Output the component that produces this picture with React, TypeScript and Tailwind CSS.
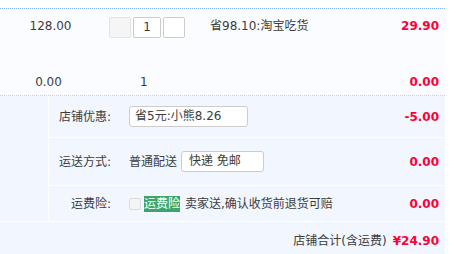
export default function App() {
  return (
    <div className="w-[456px] h-[254px] overflow-hidden bg-white text-[12px] text-[#3c3c3c] font-['DejaVu_Sans','Noto_Sans_CJK_SC',sans-serif]">
      <div className="w-[445px] pt-[8px]">
        {/* item row */}
        <div className="border-t border-b border-dotted border-t-[#80b2ff] border-b-[#d0d0d0] bg-[#fbfcff] pt-[8px] pb-[4px]">
          <div className="flex items-start h-[21px]">
            <div className="w-[101px] text-center leading-[18px]">128.00</div>
            <div className="ml-[8px] flex gap-[2px]">
              <div className="w-[22px] h-[21px] rounded-[2px] border border-[#e3e3e3] bg-[#f5f5f5]" />
              <div className="w-[28px] h-[21px] rounded-[2px] border border-[#cccccc] bg-white text-center leading-[19px]">1</div>
              <div className="w-[22px] h-[21px] rounded-[2px] border border-[#cccccc] bg-white" />
            </div>
            <div className="ml-[25px] leading-[18px]">省98.10:淘宝吃货</div>
            <div className="flex-1 pr-[6px] text-right font-bold leading-[18px] text-[#ff0036]">29.90</div>
          </div>
          <div className="mt-[35px] flex h-[18px] leading-[18px]">
            <div className="w-[97px] text-center">0.00</div>
            <div className="ml-[43px]">1</div>
            <div className="flex-1 pr-[6px] text-right font-bold text-[#ff0036]">0.00</div>
          </div>
        </div>

        {/* shop options */}
        <div className="flex border-b border-white bg-[#f2f6ff]">
          <div className="w-[49px] border-r border-white" />
          <div className="flex flex-1 flex-col">
            <div className="flex h-[42px] items-center border-b border-white">
              <div className="w-[62px] text-right">店铺优惠:</div>
              <div className="ml-[18px] h-[21px] w-[119px] rounded-[3px] border border-[#cccccc] bg-white pl-[5px] leading-[19px]">省5元:小熊8.26</div>
              <div className="flex-1 pr-[6px] text-right font-bold text-[#ff0036]">-5.00</div>
            </div>
            <div className="flex h-[48px] items-center border-b border-white">
              <div className="w-[62px] text-right">运送方式:</div>
              <div className="ml-[18px]">普通配送</div>
              <div className="ml-[4px] h-[21px] w-[83px] rounded-[3px] border border-[#cccccc] bg-white pl-[7px] leading-[19px]">快递 免邮</div>
              <div className="flex-1 pr-[6px] text-right font-bold text-[#ff0036]">0.00</div>
            </div>
            <div className="flex h-[35px] items-center">
              <div className="w-[62px] text-right">运费险:</div>
              <div className="ml-[18px] h-[12px] w-[12px] rounded-[2px] border border-[#dcdcdc] bg-[#f4f4f4]" />
              <div className="ml-[3px] h-[16px] bg-[#3ca66a] leading-[16px] text-white">运费险</div>
              <div className="ml-[5px]">卖家送,确认收货前退货可赔</div>
              <div className="flex-1 pr-[6px] text-right font-bold text-[#ff0036]">0.00</div>
            </div>
          </div>
        </div>

        {/* total */}
        <div className="flex h-[40px] justify-end gap-[6px] bg-[#f2f6ff] pr-[6px] pt-[10px] leading-[18px]">
          <span>店铺合计(含运费)</span>
          <span className="font-bold text-[#ff0036]">¥24.90</span>
        </div>
      </div>
    </div>
  );
}
